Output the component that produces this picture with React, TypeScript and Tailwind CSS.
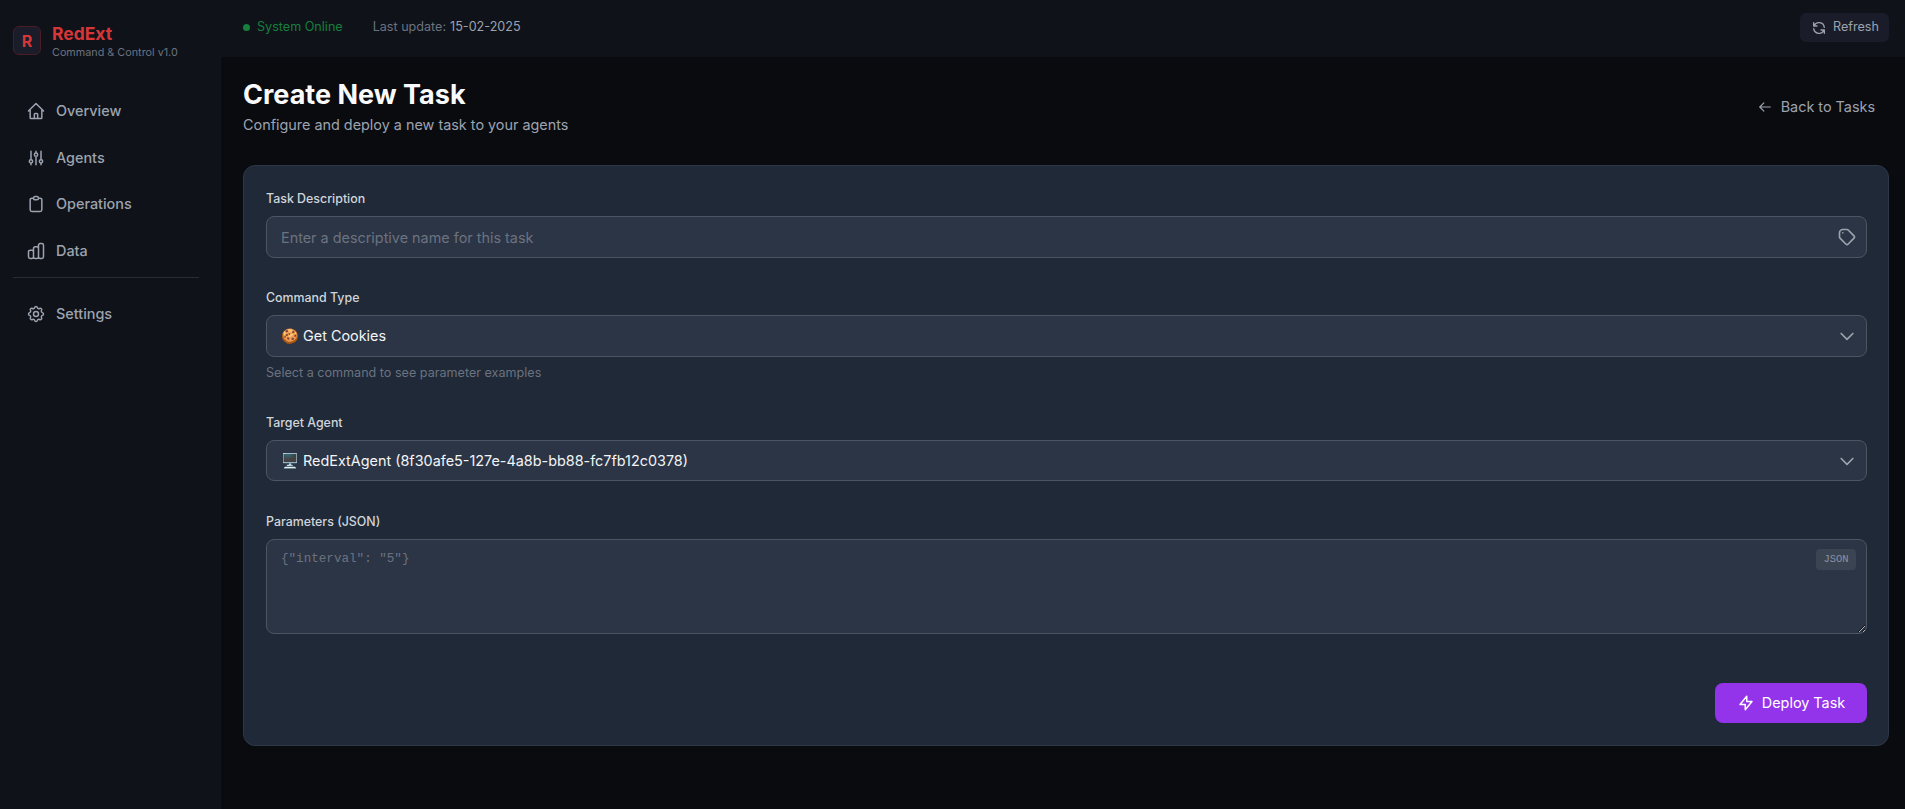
import {
  HiOutlineArrowLeft,
  HiOutlineRefresh,
  HiOutlineLightningBolt,
  HiOutlineTag,
  HiOutlineChevronDown,
  HiOutlineHome,
  HiOutlineAdjustments,
  HiOutlineClipboard,
  HiOutlineChartBar,
  HiOutlineCog,
} from 'react-icons/hi'

const navItems = [
  { label: 'Overview', icon: HiOutlineHome, cls: 'mb-[15px]' },
  { label: 'Agents', icon: HiOutlineAdjustments, cls: 'mb-[14px]' },
  { label: 'Operations', icon: HiOutlineClipboard, cls: 'mb-[15px]' },
  { label: 'Data', icon: HiOutlineChartBar, cls: '' },
]

function NavLink({ label, icon: Icon, cls }: { label: string; icon: typeof HiOutlineHome; cls?: string }) {
  return (
    <a className={`flex h-8 items-center gap-[10px] pl-[13px] text-[14.4px] font-medium leading-8 text-[#9ca3af] ${cls}`}>
      <Icon className="h-5 w-5 shrink-0 stroke-[1.8]" />
      {label}
    </a>
  )
}

function Sidebar() {
  return (
    <aside className="w-[221px] shrink-0 border-r border-[#11141b] bg-[#0f1219] px-[13px]">
      <div className="flex h-[81px] items-center gap-[11px]">
        <div className="flex h-[29px] w-[28px] items-center justify-center rounded-md border border-[#4a1d24] bg-[#1a1d29] text-[16px] font-bold text-[#d63638]">
          R
        </div>
        <div className="mt-[2px]">
          <div className="text-[17.5px] font-bold leading-[22px] text-[#d63638]">RedExt</div>
          <div className="text-[10.8px] leading-[15px] text-[#6b7280]">Command &amp; Control v1.0</div>
        </div>
      </div>
      <nav className="mt-[14px] w-[186px]">
        {navItems.map((item) => (
          <NavLink key={item.label} {...item} />
        ))}
        <div className="mt-[10px] mb-[20px] border-t border-[#262c38]" />
        <NavLink label="Settings" icon={HiOutlineCog} />
      </nav>
    </aside>
  )
}

function Topbar() {
  return (
    <header className="flex h-[57px] items-center justify-between bg-[#0f1219] pb-[2px] pl-[22px] pr-4">
      <div className="flex items-center text-[12.6px]">
        <span className="mr-[7px] h-[7px] w-[7px] rounded-full bg-[#15803d]" />
        <span className="text-[#15803d]">System Online</span>
        <span className="ml-[30px] text-[#6b7280]">Last update:</span>
        <span className="ml-1 text-[#9ca3af]">15-02-2025</span>
      </div>
      <button className="flex h-[29px] w-[89px] items-center gap-[6px] rounded-md bg-[#1a1d29] pl-[11px] text-[12.6px] text-[#9ca3af]">
        <HiOutlineRefresh className="h-4 w-4" />
        Refresh
      </button>
    </header>
  )
}

function Label({ children }: { children: string }) {
  return <label className="mb-[9px] block text-[12.4px] font-medium leading-[17px] text-[#d1d5db]">{children}</label>
}

function Select({ value, tall }: { value: string; tall?: boolean }) {
  return (
    <div className={`relative ${tall ? 'h-[42px]' : 'h-[41px]'}`}>
      <select className="h-full w-full appearance-none rounded-lg border border-[#4b5563] bg-[#2c3545] px-[14px] text-[14.4px] text-[#f3f4f6] outline-none">
        <option>{value}</option>
      </select>
      <HiOutlineChevronDown className="absolute right-[10px] top-[11px] h-5 w-5 text-[#9ca3af]" />
    </div>
  )
}

export default function App() {
  return (
    <div className="flex h-[809px] overflow-hidden bg-[#0a0b0f] font-['Inter',sans-serif]">
      <Sidebar />
      <div className="min-w-0 flex-1">
        <Topbar />
        <main className="pl-[22px] pr-4">
          <div className="flex h-[108px] items-start justify-between pt-[20px]">
            <div>
              <h1 className="text-[27px] font-bold leading-[35px] text-[#f9fafb]">Create New Task</h1>
              <p className="mt-[2px] text-[14.4px] leading-[21px] text-[#9ca3af]">Configure and deploy a new task to your agents</p>
            </div>
            <a className="mt-[19px] mr-[14px] flex items-center gap-[9px] text-[14.4px] text-[#9ca3af]">
              <HiOutlineArrowLeft className="h-[14px] w-[14px]" />
              Back to Tasks
            </a>
          </div>
          <form className="h-[581px] rounded-xl border border-[#2d3748] bg-[#1f2937] pl-[22px] pr-[21px] pt-[24px]">
            <div className="mb-[31px]">
              <Label>Task Description</Label>
              <div className="relative h-[42px]">
                <input
                  placeholder="Enter a descriptive name for this task"
                  className="h-full w-full rounded-lg border border-[#4b5563] bg-[#2c3545] px-[14px] text-[14.4px] text-[#f3f4f6] outline-none placeholder:text-[#6b7280]"
                />
                <HiOutlineTag className="absolute right-[10px] top-[11px] h-5 w-5 text-[#9ca3af]" />
              </div>
            </div>
            <div className="mb-[33px]">
              <Label>Command Type</Label>
              <Select value="🍪 Get Cookies" tall />
              <p className="mt-[7px] text-[12.6px] leading-[17px] text-[#6b7280]">Select a command to see parameter examples</p>
            </div>
            <div className="mb-[32px]">
              <Label>Target Agent</Label>
              <Select value="🖥️ RedExtAgent (8f30afe5-127e-4a8b-bb88-fc7fb12c0378)" />
            </div>
            <div className="mb-[49px]">
              <Label>Parameters (JSON)</Label>
              <div className="relative h-[95px]">
                <textarea
                  placeholder={'{"interval": "5"}'}
                  className="block h-full w-full resize-y rounded-lg border border-[#4b5563] bg-[#2c3545] px-[14px] py-[10px] font-['Liberation_Mono',monospace] text-[12.6px] text-[#f3f4f6] outline-none placeholder:text-[#6b7280]"
                />
                <span className="absolute right-[11px] top-[10px] h-[21px] w-[40px] rounded bg-[#3a4453] text-center font-['Liberation_Mono',monospace] text-[10.5px] leading-[21px] text-[#8b93a1]">
                  JSON
                </span>
              </div>
            </div>
            <div className="flex justify-end">
              <button
                type="button"
                className="flex h-10 w-[152px] items-center justify-center gap-[7px] rounded-lg bg-[#9333ea] text-[14.4px] text-white"
              >
                <HiOutlineLightningBolt className="h-[18px] w-[18px]" />
                Deploy Task
              </button>
            </div>
          </form>
        </main>
      </div>
    </div>
  )
}
